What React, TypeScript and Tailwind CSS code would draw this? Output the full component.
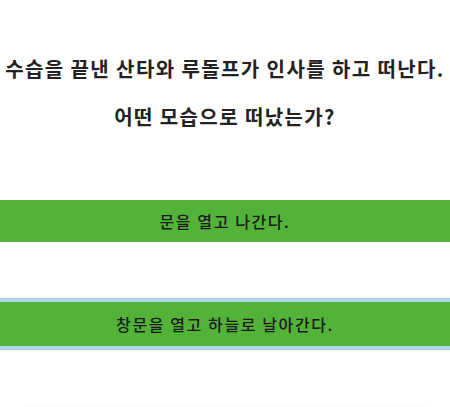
export default function App() {
  return (
    <div className="h-[407px] overflow-hidden bg-white font-['Noto_Sans_CJK_KR',sans-serif] text-[#222]">
      <div className="pt-[55px] text-center text-[20px] font-bold leading-[28px] tracking-[1.4px]">
        <p>수습을 끝낸 산타와 루돌프가 인사를 하고 떠난다.</p>
        <p className="mt-[20px]">어떤 모습으로 떠났는가?</p>
      </div>
      <div className="mt-[69px] flex flex-col">
        <button className="h-[42px] w-full bg-[#53b339] text-[16px] font-medium tracking-[1.6px] text-[#1a1a1a]">
          문을 열고 나간다.
        </button>
        <button className="mt-[56px] h-[52px] w-full border-y-4 border-[#acd7e2] bg-[#53b339] text-[16px] font-medium tracking-[1.6px] text-[#1a1a1a]">
          창문을 열고 하늘로 날아간다.
        </button>
      </div>
      <div className="mx-[25px] mt-[55px] h-[40px] bg-[#fafafa]" />
    </div>
  )
}
